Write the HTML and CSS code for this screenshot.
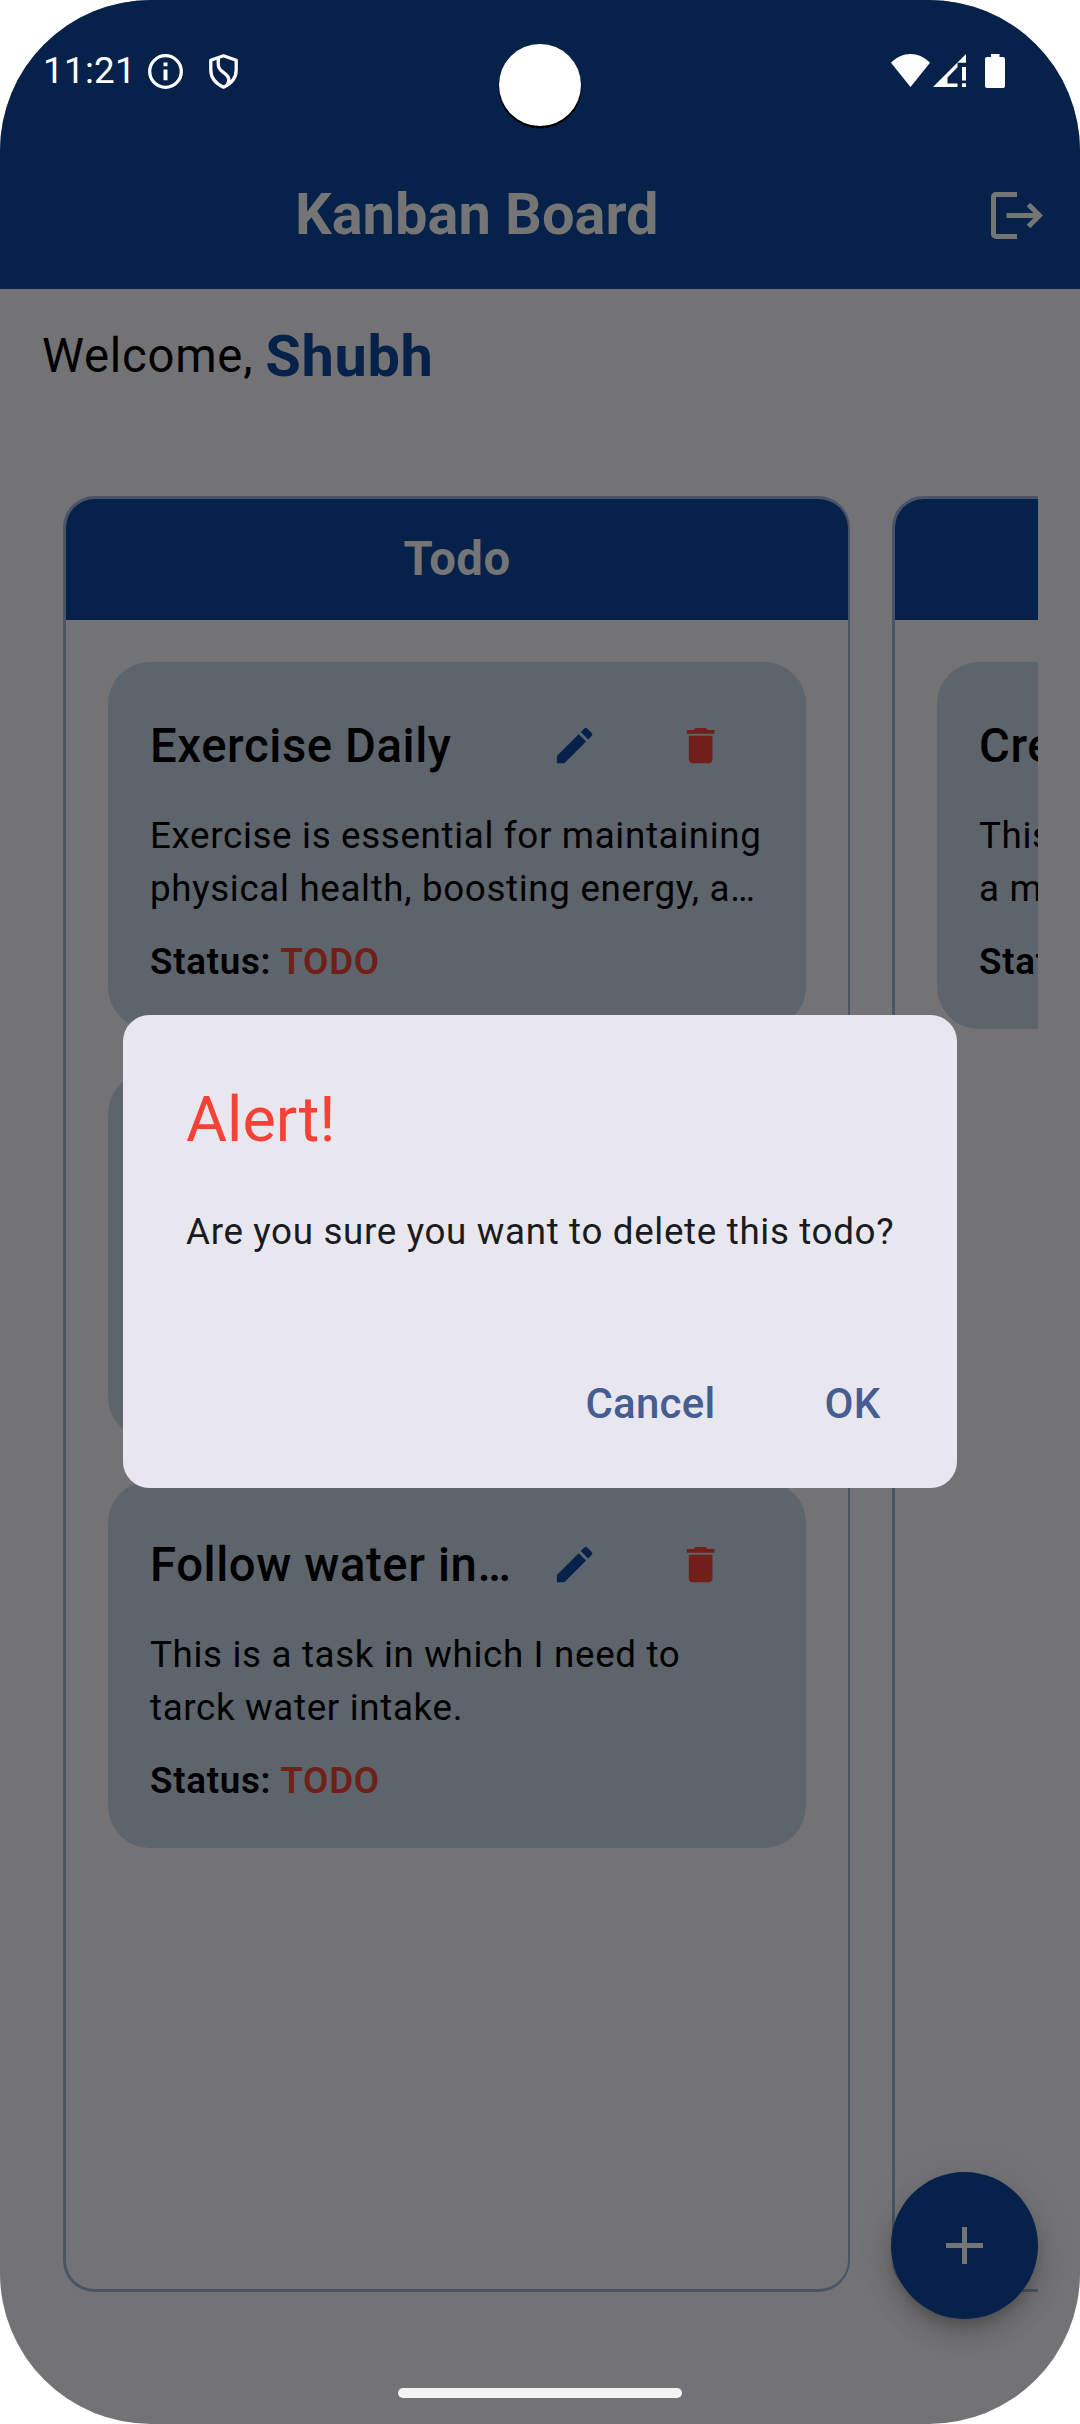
FILE: index.html
```html
<!DOCTYPE html>
<html lang="en">
<head>
<meta charset="utf-8">
<title>Kanban Board</title>
<link rel="stylesheet" href="styles.css">
</head>
<body>
<svg class="symbols" aria-hidden="true">
  <symbol id="edit" viewBox="0 0 24 24"><path d="M3 17.25V21h3.75L17.81 9.94l-3.75-3.75L3 17.25zM20.71 7.04a1 1 0 0 0 0-1.41l-2.34-2.34a1 1 0 0 0-1.41 0l-1.83 1.83 3.75 3.75 1.83-1.83z"/></symbol>
  <symbol id="trash" viewBox="0 0 24 24"><path d="M6 19c0 1.100.9 2 2 2h8c1.100 0 2-.9 2-2V7H6v12zM19 4h-3.500l-1-1h-5l-1 1H5v2h14V4z"/></symbol>
</svg>
<div class="phone">
  <header class="appbar">
    <h1 class="appbar-title">Kanban Board</h1>
    <svg class="logout" viewBox="0 0 52 47"><path d="M26 2.500H5A2.500 2.500 0 0 0 2.500 5v37A2.500 2.500 0 0 0 5 44.500h21M15.500 23.500H49M37.500 12.500l11 11-11 11"/></svg>
  </header>
  <div class="welcome"><span>Welcome,</span><strong class="user">Shubh</strong></div>
  <main class="board">
    <section class="column">
      <h2 class="column-title">Todo</h2>
      <div class="cards">
        <article class="card">
          <div class="card-head"><h3 class="card-title">Exercise Daily</h3><span class="action edit"><svg><use href="#edit"/></svg></span><span class="action trash"><svg><use href="#trash"/></svg></span></div>
          <p class="card-text">Exercise is essential for maintaining<br>physical health, boosting energy, a…</p>
          <p class="card-status">Status: <b>TODO</b></p>
        </article>
        <article class="card">
        </article>
        <article class="card">
          <div class="card-head"><h3 class="card-title">Follow water in…</h3><span class="action edit"><svg><use href="#edit"/></svg></span><span class="action trash"><svg><use href="#trash"/></svg></span></div>
          <p class="card-text">This is a task in which I need to<br>tarck water intake.</p>
          <p class="card-status">Status: <b>TODO</b></p>
        </article>
      </div>
    </section>
    <section class="column">
      <h2 class="column-title"></h2>
      <div class="cards">
        <article class="card">
          <div class="card-head"><h3 class="card-title">Cre</h3></div>
          <p class="card-text">This<br>a m</p>
          <p class="card-status">Stat</p>
        </article>
      </div>
    </section>
  </main>
  <div class="fab"><svg viewBox="0 0 37 37"><path d="M18.500 0v37M0 18.500h37"/></svg></div>

  <div class="overlay">
    <div class="dialog">
      <h2 class="dialog-title">Alert!</h2>
      <p class="dialog-text">Are you sure you want to delete this todo?</p>
      <div class="dialog-actions"><span>Cancel</span><span>OK</span></div>
    </div>
  </div>

  <div class="statusbar">
    <span class="clock">11:21</span>
    <svg class="info" viewBox="0 0 35 35"><circle cx="17.500" cy="17.500" r="15.800" fill="none" stroke="#fff" stroke-width="3.300"/><path fill="#fff" d="M15.500 8.500h4v3.700h-4zM15.500 15.500h4v10.800h-4z"/></svg>
    <svg class="shield" viewBox="0 0 29 35"><path fill="none" stroke="#fff" stroke-width="3.300" stroke-linejoin="round" d="M14.500 1.800L27.200 6.300V16C27.200 24 22.500 29.500 14.500 33.200C6.500 29.500 1.800 24 1.800 16V6.300zM9.500 4.500C8 16 12 16 16.500 20C20.500 23.500 20.500 26 18.500 30.500"/></svg>
    <span class="spacer"></span>
    <svg class="wifi" viewBox="0 0 39 33"><path fill="#fff" d="M0 8.700C11-2.900 28-2.900 39 8.700L19.500 33z"/></svg>
    <svg class="signal" viewBox="0 0 33 33"><path fill="#fff" fill-rule="evenodd" d="M33 0v8.700h-8.500v4.500L14.500 23.500v6h10V33H0zM29 13h4v13.500h-4zM29 29.300h4V33h-4z"/></svg>
    <svg class="battery" viewBox="0 0 20 34"><path fill="#fff" d="M6 0h8.500v3H18a2 2 0 0 1 2 2v27a2 2 0 0 1-2 2H2a2 2 0 0 1-2-2V5a2 2 0 0 1 2-2h4z"/></svg>
  </div>
  <div class="camera"></div>
  <div class="homebar"></div>
</div>
</body>
</html>
```

FILE: styles.css
```css
* { box-sizing: border-box; }
body { margin: 0; background: #fff; font-family: Roboto, "Liberation Sans", sans-serif; }
h1, h2, h3, p { margin: 0; }
.symbols { display: none; }
.phone { position: relative; width: 1080px; height: 2424px; border-radius: 151px; overflow: hidden; background: #737375; color: #000; display: flex; flex-direction: column; }

.appbar { height: 289px; flex: none; padding: 142px 37px 0 0; background: #06214a; color: #757575; display: flex; align-items: center; }
.appbar-title { flex: 1; padding: 0 0 3px 295px; font-size: 57.75px; line-height: 74px; font-weight: 700; white-space: nowrap; }
.logout { width: 52px; height: 47px; fill: none; stroke: #757575; stroke-width: 5; }

.welcome { height: 134px; margin: 0 42px; display: flex; align-items: center; gap: 12px; font-size: 47.25px; line-height: 68px; letter-spacing: .75px; }
.user { font-size: 57.75px; font-weight: 700; color: #06214a; letter-spacing: .65px; }

.board { width: 996px; height: 1796px; margin: 73px 42px 0; padding-left: 21px; overflow: hidden; display: flex; gap: 42px; }
.column { flex: none; width: 787px; border: 3px solid #4a5468; border-right-width: 2px; border-radius: 31.5px; overflow: hidden; }
.column-title { height: 121px; background: #06214a; color: #757575; text-align: center; font-size: 47.25px; line-height: 120px; font-weight: 700; letter-spacing: .5px; }
.cards { padding: 42px; display: flex; flex-direction: column; gap: 42.5px; }
.card { height: 367px; border-radius: 42px; background: #5d646b; padding: 21px 42px 0; }
.card-head { height: 126px; display: flex; align-items: center; }
.card-title { flex: 1; font-size: 47.25px; line-height: 68px; font-weight: 500; letter-spacing: .6px; white-space: nowrap; }
.action { width: 126px; display: flex; justify-content: center; }
.action svg { width: 47.25px; height: 47.25px; }
.edit { fill: #06214a; }
.trash { fill: #701f19; }
.card-text { margin-top: 1px; font-size: 36.75px; line-height: 52.5px; letter-spacing: .66px; white-space: nowrap; }
.card-status { margin-top: 21px; font-size: 36.75px; line-height: 52.5px; font-weight: 600; letter-spacing: .72px; white-space: nowrap; }
.card-status b { font-weight: 600; color: #701f19; }

.fab { position: absolute; left: 891px; top: 2172px; width: 147px; height: 147px; border-radius: 50%; background: #06214a; display: flex; align-items: center; justify-content: center; box-shadow: 0 8px 13px -3px rgba(0,0,0,.2), 0 16px 26px rgba(0,0,0,.14), 0 3px 47px rgba(0,0,0,.06); }
.fab svg { width: 37px; height: 37px; fill: none; stroke: #757575; stroke-width: 5; }

.overlay { position: absolute; inset: 0; padding-top: 1015px; display: flex; justify-content: center; align-items: flex-start; }
.dialog { width: 834px; height: 473px; padding: 63px 63px 0; border-radius: 26.25px; background: #e8e6ef; }
.dialog-title { font-size: 63px; line-height: 84px; font-weight: 400; color: #f44336; }
.dialog-text { margin-top: 44px; font-size: 36.75px; line-height: 52.5px; letter-spacing: .66px; color: #1a1b20; white-space: nowrap; }
.dialog-actions { margin: 115px 13.500px 0 0; display: flex; justify-content: flex-end; gap: 109px; font-size: 42px; line-height: 60px; font-weight: 500; color: #465d91; letter-spacing: .26px; }

.statusbar { position: absolute; left: 0; top: 0; width: 1080px; height: 142px; padding: 54px 75px 0 43px; display: flex; align-items: flex-start; color: #fff; }
.clock { width: 105px; font-size: 36.75px; line-height: 34px; letter-spacing: .3px; }
.info { width: 35px; height: 35px; }
.shield { width: 29px; height: 35px; margin-left: 26px; }
.spacer { flex: 1; }
.wifi { width: 39px; height: 33px; }
.signal { width: 33px; height: 33px; margin-left: 3px; }
.battery { width: 20px; height: 34px; margin-left: 19px; }
.camera { position: absolute; left: 499px; top: 44px; width: 82px; height: 82px; border-radius: 50%; background: #fff; box-shadow: 0 2px 0 .5px #000; }
.homebar { position: absolute; left: 398px; top: 2388px; width: 284px; height: 10px; border-radius: 5px; background: #f4f4f4; }
```
